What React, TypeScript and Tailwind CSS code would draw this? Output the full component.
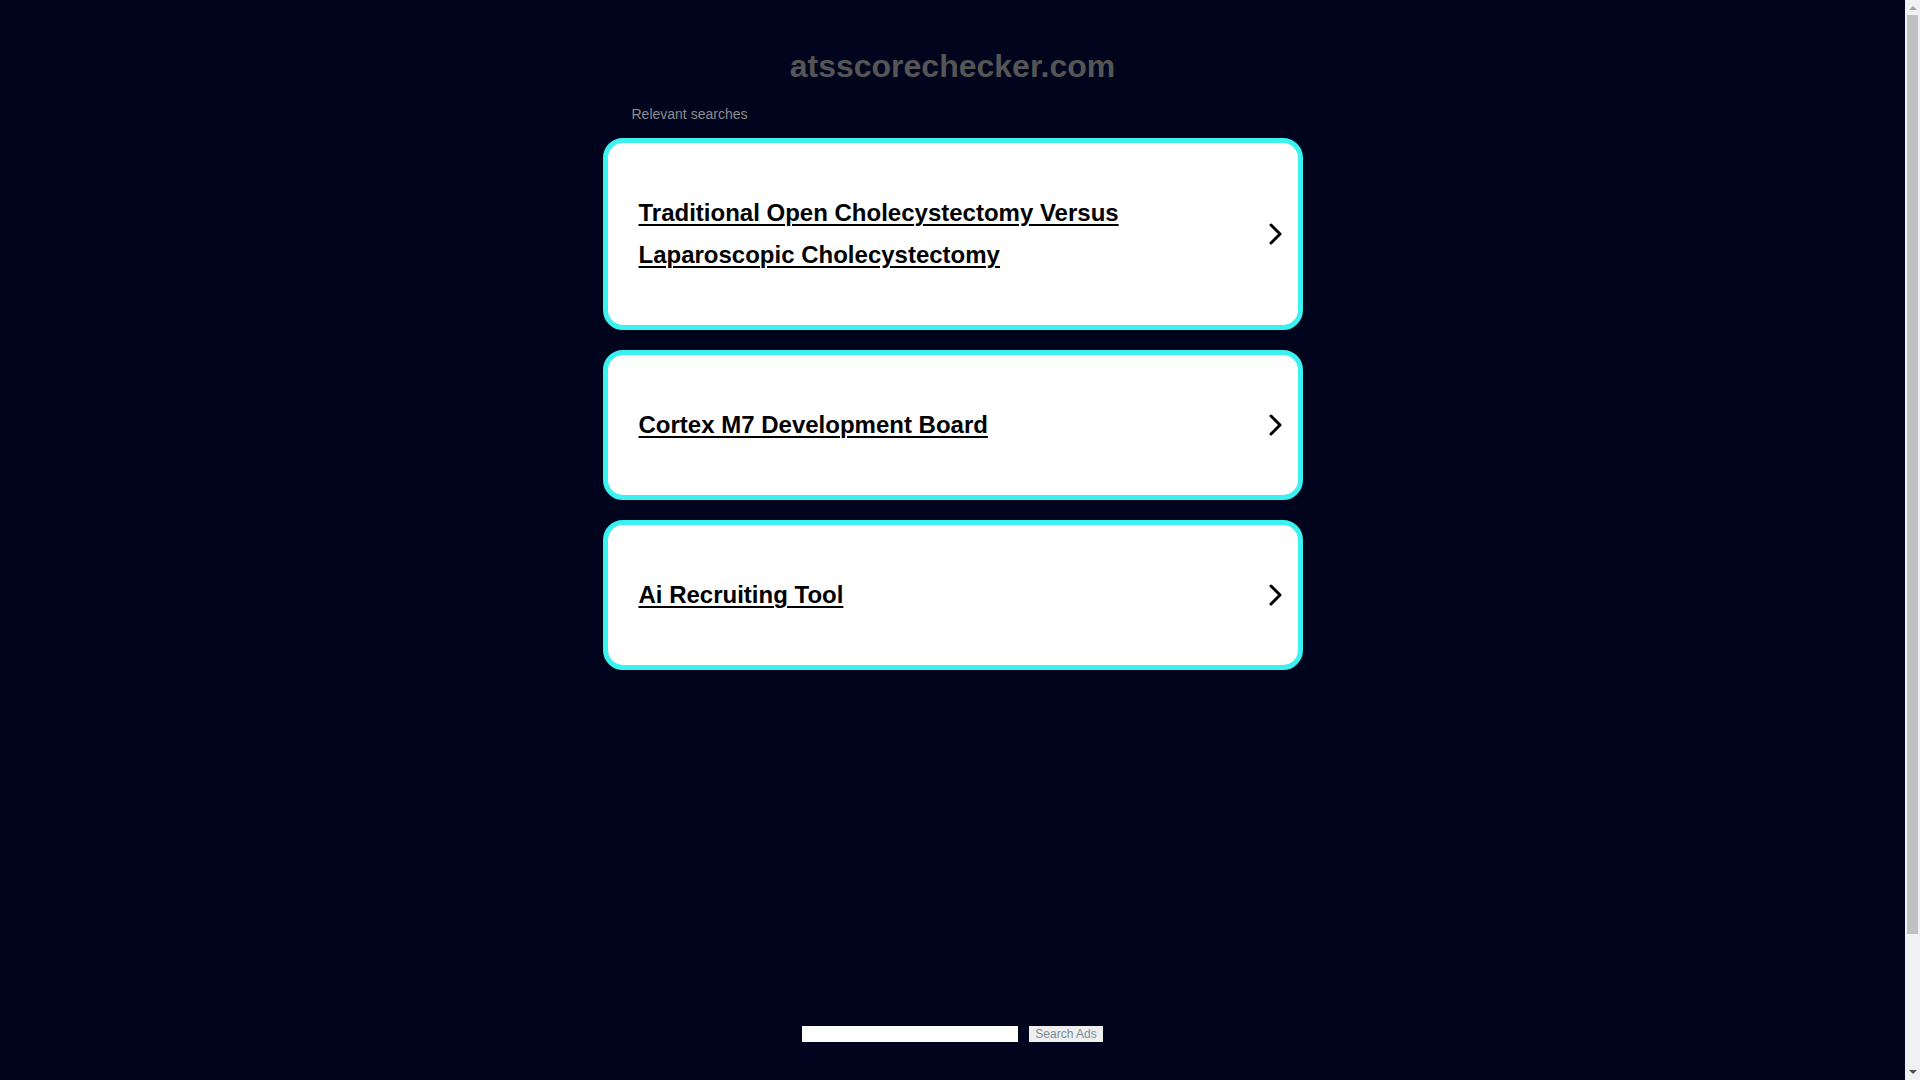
import React from "react";

const items = [
  { text: "Traditional Open Cholecystectomy Versus Laparoscopic Cholecystectomy" },
  { text: "Cortex M7 Development Board" },
  { text: "Ai Recruiting Tool" },
];

function Chevron() {
  return (
    <svg width="16" height="24" viewBox="0 0 16 24" className="shrink-0">
      <polyline
        points="3,3 12,12 3,21"
        fill="none"
        stroke="#000"
        strokeWidth="3"
        strokeLinecap="round"
        strokeLinejoin="round"
      />
    </svg>
  );
}

function Scrollbar() {
  return (
    <div className="w-[15px] h-full bg-[#f1f1f1] flex flex-col items-center shrink-0">
      <div className="h-[15px] flex items-center justify-center">
        <svg width="8" height="5" viewBox="0 0 8 5">
          <polygon points="0,5 4,1 8,5" fill="#a3a3a3" />
        </svg>
      </div>
      <div className="flex-1 w-full px-[2px]">
        <div className="h-[919px] w-full bg-[#c1c1c1]" />
      </div>
      <div className="h-[15px] flex items-center justify-center">
        <svg width="8" height="5" viewBox="0 0 8 5">
          <polygon points="0,0 4,4 8,0" fill="#505050" />
        </svg>
      </div>
    </div>
  );
}

export default function App() {
  return (
    <div className="h-screen flex overflow-hidden bg-[#00051e] font-['Liberation_Sans',Arial,sans-serif]">
      <div className="flex-1 min-h-[1234px]">
        <div className="w-[700px] mx-auto pt-[48px]">
          <h1 className="text-center text-[32px] font-bold text-[#555555] leading-[36px]">
            atsscorechecker.com
          </h1>
          <div className="mt-[22px] pl-[29px] text-[14px] leading-[16px] text-[#8c8c8c]">
            Relevant searches
          </div>
          <div className="mt-[16px] flex flex-col gap-[20px]">
            {items.map((it) => (
              <a
                key={it.text}
                href="#"
                className="flex items-center bg-white border-[5px] border-[#3cf2f0] rounded-[20px] pl-[31px] pr-[14px] py-[49px]"
              >
                <span className="flex-1 pr-[60px] text-[24px] leading-[42px] font-bold text-black underline underline-offset-[3px] decoration-[2px]">
                  {it.text}
                </span>
                <Chevron />
              </a>
            ))}
          </div>
        </div>
        <div className="mt-[356px] flex justify-center gap-[11px]">
          <input type="text" className="w-[216px] h-[16px] bg-white border-0 outline-none" />
          <button className="h-[16px] px-[6px] bg-[#efefef] text-[#7b8b9b] text-[12px] leading-[16px]">
            Search Ads
          </button>
        </div>
      </div>
      <Scrollbar />
    </div>
  );
}
